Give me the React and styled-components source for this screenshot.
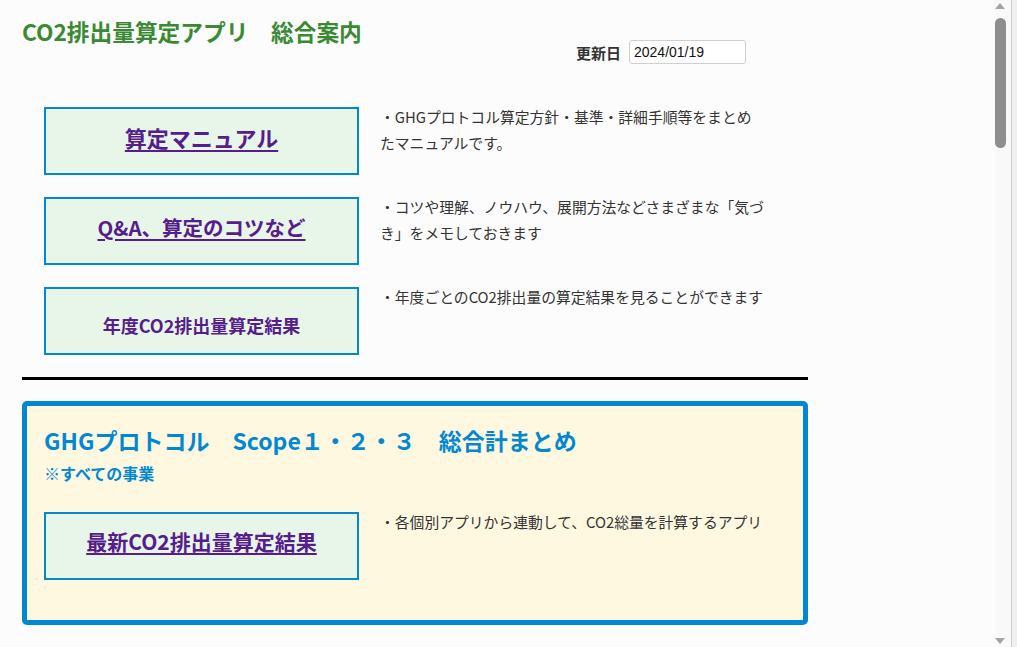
import React from "react";
import styled, { createGlobalStyle } from "styled-components";

const Global = createGlobalStyle`
  html, body { margin: 0; padding: 0; background: #fcfcfc; }
  body { font-family: "Noto Sans CJK JP", "Noto Sans", sans-serif; color: #333; }
`;

const Page = styled.div`
  padding: 0 0 40px 22px;
  width: 786px;
`;

const Header = styled.header`
  display: flex;
  justify-content: space-between;
  align-items: flex-start;
  width: 724px;
  padding-top: 15px;
`;

const Title = styled.h1`
  margin: 0;
  font-size: 22.7px;
  line-height: 34px;
  font-weight: 700;
  color: #3a8a34;
  white-space: pre;
`;

const DateGroup = styled.div`
  display: flex;
  align-items: center;
  gap: 8px;
  margin-top: 25px;
`;

const DateLabel = styled.span`
  font-size: 15px;
  font-weight: 700;
  color: #333;
`;

const DateInput = styled.div`
  box-sizing: border-box;
  width: 117px;
  height: 24px;
  border: 1px solid #cfcfcf;
  border-radius: 3px;
  background: #fff;
  font-family: "Liberation Sans", Arial, sans-serif;
  font-size: 14px;
  line-height: 22px;
  padding-left: 4px;
  color: #111;
`;

const Rows = styled.div`
  display: flex;
  flex-direction: column;
  gap: 22px;
  padding: 43px 0 0 22px;
`;

const Row = styled.div`
  display: flex;
  align-items: flex-start;
  gap: 21px;
`;

const LinkBox = styled.div`
  box-sizing: border-box;
  width: 315px;
  height: 68px;
  border: 2px solid #0288d1;
  background: #e8f5e9;
  display: flex;
  align-items: center;
  justify-content: center;
  padding: ${(p) => (p.$offset ? `${p.$offset}px 0 0` : "0 0 8px")};
`;

const LinkText = styled.a`
  font-size: ${(p) => p.$size}px;
  font-weight: 700;
  color: #561d8d;
  text-decoration: ${(p) => (p.$plain ? "none" : "underline")};
  text-decoration-thickness: 2px;
  text-underline-offset: 3px;
  line-height: 1.3;
  cursor: pointer;
`;

const Desc = styled.p`
  margin: -3px 0 0;
  font-size: 14.8px;
  line-height: 26px;
  color: #333;
  white-space: nowrap;
`;

const Rule = styled.hr`
  margin: 22px 0 21px;
  border: 0;
  height: 3px;
  background: #000;
  width: 786px;
`;

const ScopeBox = styled.section`
  box-sizing: border-box;
  width: 786px;
  border: 5px solid #0288d1;
  border-radius: 5px;
  background: #fff8e1;
  padding: 18px 0 40px 17px;
`;

const ScopeTitle = styled.h2`
  margin: 0;
  font-size: 23px;
  line-height: 33px;
  font-weight: 700;
  color: #0288d1;
  white-space: pre;
`;

const ScopeNote = styled.div`
  margin-top: 5px;
  font-size: 16px;
  line-height: 22px;
  font-weight: 700;
  color: #0288d1;
`;

const ScopeRow = styled(Row)`
  margin-top: 28px;
`;

const ScrollTrack = styled.div`
  position: fixed;
  top: 0;
  right: 0;
  bottom: 0;
  width: 23px;
  background: #f9f9f9;
  border-right: 5px solid #f0f0f0;
  box-sizing: border-box;
  display: flex;
  flex-direction: column;
  align-items: center;
  padding: 3px 6px 3px 0;
  box-shadow: inset -1px 0 0 #cfcfcf;
`;

const Arrow = styled.div`
  width: 0;
  height: 0;
  border-left: 5.5px solid transparent;
  border-right: 5.5px solid transparent;
  border-${(p) => (p.$down ? "top" : "bottom")}: 6px solid #a3a3a3;
  margin-top: ${(p) => (p.$down ? "auto" : "0")};
`;

const Thumb = styled.div`
  margin-top: 9px;
  width: 11px;
  height: 130px;
  border-radius: 5.5px;
  background: #8e8e8e;
`;

const rows = [
  {
    label: "算定マニュアル",
    size: 22,
    desc: ["・GHGプロトコル算定方針・基準・詳細手順等をまとめ", "たマニュアルです。"],
  },
  {
    label: "Q&A、算定のコツなど",
    size: 20.5,
    desc: ["・コツや理解、ノウハウ、展開方法などさまざまな「気づ", "き」をメモしておきます"],
  },
  {
    label: "年度CO2排出量算定結果",
    size: 18,
    plain: true,
    offset: 9,
    desc: ["・年度ごとのCO2排出量の算定結果を見ることができます"],
  },
];

function DescLines({ lines }) {
  return (
    <Desc>
      {lines.map((l, i) => (
        <React.Fragment key={i}>
          {i > 0 && <br />}
          {l}
        </React.Fragment>
      ))}
    </Desc>
  );
}

export default function App() {
  return (
    <>
      <Global />
      <Page>
        <Header>
          <Title>CO2排出量算定アプリ　総合案内</Title>
          <DateGroup>
            <DateLabel>更新日</DateLabel>
            <DateInput>2024/01/19</DateInput>
          </DateGroup>
        </Header>
        <Rows>
          {rows.map((r) => (
            <Row key={r.label}>
              <LinkBox $offset={r.offset}>
                <LinkText $size={r.size} $plain={r.plain}>
                  {r.label}
                </LinkText>
              </LinkBox>
              <DescLines lines={r.desc} />
            </Row>
          ))}
        </Rows>
        <Rule />
        <ScopeBox>
          <ScopeTitle>GHGプロトコル　Scope１・２・３　総合計まとめ</ScopeTitle>
          <ScopeNote>※すべての事業</ScopeNote>
          <ScopeRow>
            <LinkBox>
              <LinkText $size={21}>最新CO2排出量算定結果</LinkText>
            </LinkBox>
            <DescLines lines={["・各個別アプリから連動して、CO2総量を計算するアプリ"]} />
          </ScopeRow>
        </ScopeBox>
      </Page>
      <ScrollTrack aria-hidden="true">
        <Arrow />
        <Thumb />
        <Arrow $down />
      </ScrollTrack>
    </>
  );
}
